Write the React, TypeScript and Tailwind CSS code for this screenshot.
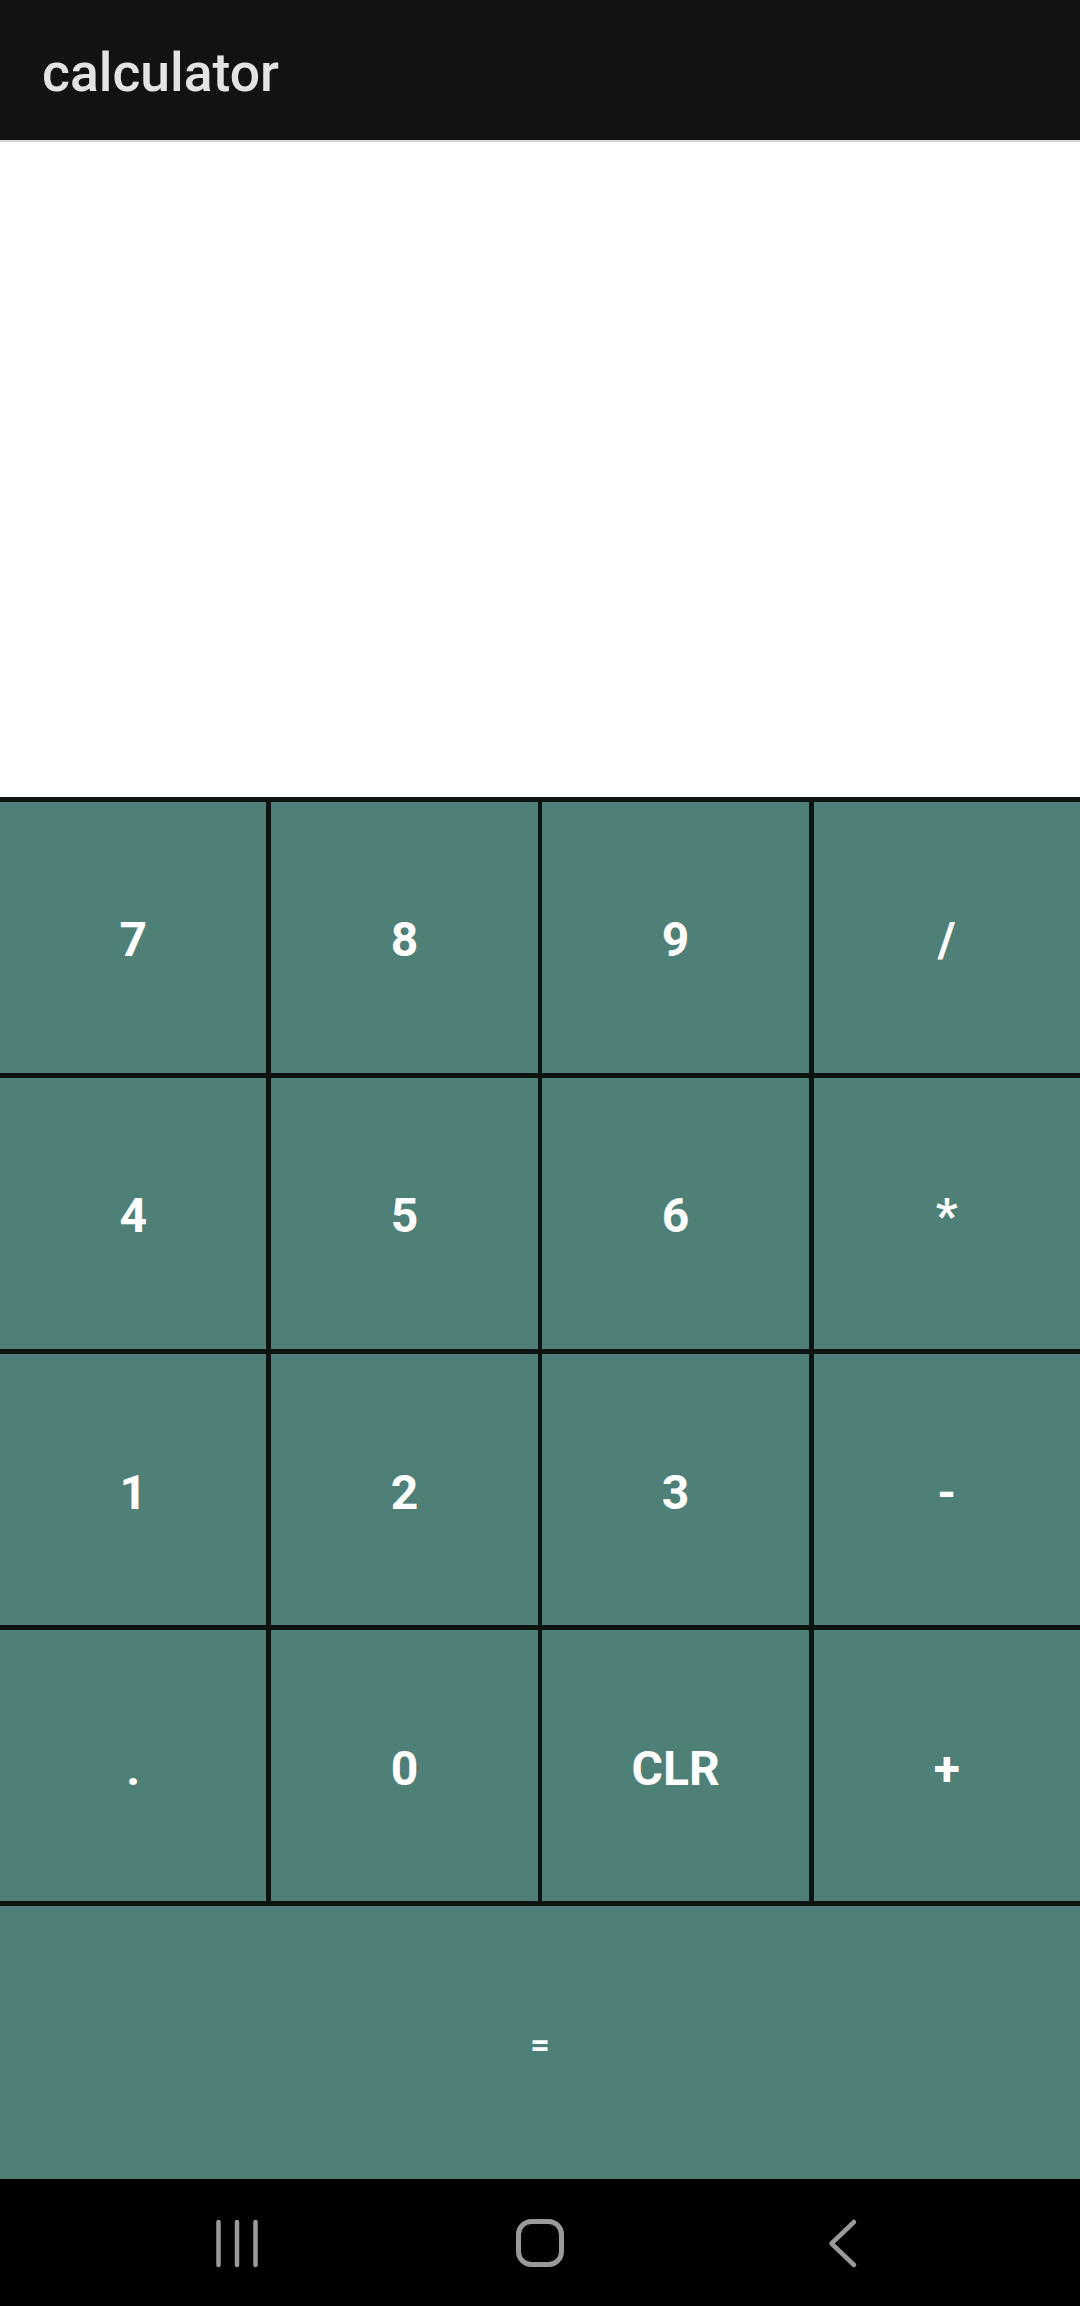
import React from "react";

const keys = ["7", "8", "9", "/", "4", "5", "6", "*", "1", "2", "3", "-", ".", "0", "CLR", "+"];

export default function App() {
  return (
    <div className="flex h-[2306px] w-[1080px] flex-col bg-white" style={{ fontFamily: "Roboto, 'Noto Sans', sans-serif" }}>
      <div className="flex h-[140px] items-center bg-[#121212] pl-[42px] pt-[5px]">
        <span className="text-[53.5px] font-medium leading-none text-[#e3e3e3]">calculator</span>
      </div>
      <div className="h-[2px] bg-[#d8d8d8]" />
      <div className="h-[655px] bg-white" />
      <div className="grid h-[1382px] grid-cols-4 grid-rows-[repeat(4,271.5px)_273px] gap-x-[4.7px] gap-y-[4.6px] bg-[#0d1311] pt-[4.6px]">
        {keys.map((k) => (
          <div key={k} className="flex items-center justify-center bg-[#4e8077] pt-[6px] text-[48px] font-bold leading-none text-white">
            {k}
          </div>
        ))}
        <div className="col-span-4 flex items-center justify-center bg-[#4e8077] pt-[4px] text-[34px] font-bold leading-none text-white">
          =
        </div>
      </div>
      <div className="flex h-[127px] items-center justify-center gap-[243px] bg-black">
        <svg width="60" height="60" viewBox="0 0 60 60" fill="none" stroke="#9a9a9a" strokeWidth="4.5" strokeLinecap="round">
          <line x1="11.5" y1="9" x2="11.5" y2="52" />
          <line x1="30" y1="9" x2="30" y2="52" />
          <line x1="48.5" y1="9" x2="48.5" y2="52" />
        </svg>
        <svg width="60" height="60" viewBox="0 0 60 60" fill="none" stroke="#9a9a9a" strokeWidth="5">
          <rect x="8.5" y="8.5" width="43" height="43" rx="13" />
        </svg>
        <svg width="60" height="60" viewBox="0 0 60 60" fill="none" stroke="#9a9a9a" strokeWidth="4.5" strokeLinecap="round" strokeLinejoin="round">
          <polyline points="41,9 18.5,30.5 41,52" />
        </svg>
      </div>
    </div>
  );
}
